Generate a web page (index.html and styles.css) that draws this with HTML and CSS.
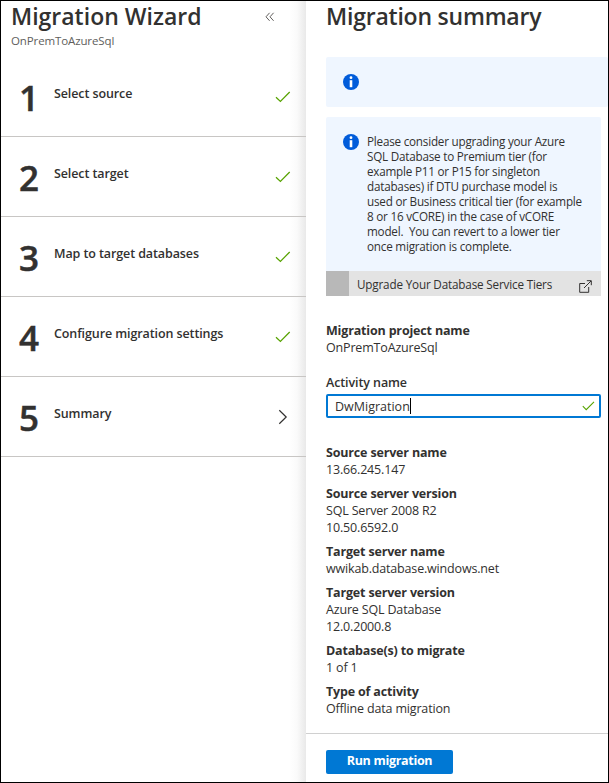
FILE: index.html
```html
<!DOCTYPE html>
<html lang="en">
<head>
<meta charset="utf-8">
<title>Migration Wizard</title>
<link rel="stylesheet" href="styles.css">
</head>
<body>
<div class="window">
  <section class="wizard">
    <header class="wizard-head">
      <h1 class="title"><span>Migration Wizard</span></h1>
      <svg class="collapse" width="10" height="10" viewBox="0 0 10 10"><path d="M4.6 .8 1 4.8l3.6 4M8.6.8 5 4.8l3.6 4"/></svg>
    </header>
    <p class="subtitle"><span>OnPremToAzureSql</span></p>
    <ol class="steps">
      <li class="step"><b class="num">1</b><span class="label">Select source</span><svg class="check" width="16" height="12" viewBox="0 0 16 12"><path d="M1 6.2 5.4 10.4 14.7 1"/></svg></li>
      <li class="step"><b class="num">2</b><span class="label">Select target</span><svg class="check" width="16" height="12" viewBox="0 0 16 12"><path d="M1 6.2 5.4 10.4 14.7 1"/></svg></li>
      <li class="step"><b class="num">3</b><span class="label">Map to target databases</span><svg class="check" width="16" height="12" viewBox="0 0 16 12"><path d="M1 6.2 5.4 10.4 14.7 1"/></svg></li>
      <li class="step"><b class="num">4</b><span class="label">Configure migration settings</span><svg class="check" width="16" height="12" viewBox="0 0 16 12"><path d="M1 6.2 5.4 10.4 14.7 1"/></svg></li>
      <li class="step"><b class="num">5</b><span class="label">Summary</span><svg class="chevron" width="16" height="16" viewBox="0 0 16 16"><path d="M4.3 1.2 11.2 8l-6.9 6.8"/></svg></li>
    </ol>
  </section>
  <section class="summary">
    <div class="content">
      <h1 class="title summary-title"><span>Migration summary</span></h1>
      <div class="notice empty">
        <svg width="16" height="16" viewBox="0 0 16 16"><circle cx="8" cy="8" r="8" fill="#015cda"/><circle cx="8" cy="3.7" r="1.4" fill="#fff"/><path d="M6.7 6.2h2.6v7H6.7z" fill="#fff"/></svg>
      </div>
      <div class="notice advice">
        <svg width="16" height="16" viewBox="0 0 16 16"><circle cx="8" cy="8" r="8" fill="#015cda"/><circle cx="8" cy="3.7" r="1.4" fill="#fff"/><path d="M6.7 6.2h2.6v7H6.7z" fill="#fff"/></svg>
        <p>Please consider upgrading your Azure<br>SQL Database to Premium tier (for<br>example P11 or P15 for singleton<br>databases) if DTU purchase model is<br>used or Business critical tier (for example<br>8 or 16 vCORE) in the case of vCORE<br>model.&nbsp; You can revert to a lower tier<br>once migration is complete.</p>
      </div>
      <a class="upgrade"><i></i><span>Upgrade Your Database Service Tiers</span><svg width="13" height="13" viewBox="0 0 13 13"><path d="M6 3.5H.7v8.8h9V7M5 8 12 1M7.8.7h4.5v4.5"/></svg></a>
      <dl class="project"><dt>Migration project name</dt><dd>OnPremToAzureSql</dd></dl>
      <label class="field-label"><span>Activity name</span></label>
      <div class="field"><span>DwMigration</span><i class="caret"></i><svg class="check" width="13" height="10" viewBox="0 0 13 10"><path d="M.8 5.2 4.2 8.6 12 .8"/></svg></div>
      <dl class="details">
        <div><dt>Source server name</dt><dd>13.66.245.147</dd></div>
        <div><dt>Source server version</dt><dd>SQL Server 2008 R2</dd><dd>10.50.6592.0</dd></div>
        <div><dt>Target server name</dt><dd>wwikab.database.windows.net</dd></div>
        <div><dt>Target server version</dt><dd>Azure SQL Database</dd><dd>12.0.2000.8</dd></div>
        <div><dt>Database(s) to migrate</dt><dd>1 of 1</dd></div>
        <div><dt>Type of activity</dt><dd>Offline data migration</dd></div>
      </dl>
    </div>
    <footer class="actions"><button class="run">Run migration</button></footer>
  </section>
</div>
</body>
</html>
```
FILE: styles.css
```css
* { box-sizing: border-box; }
body, h1, p, ol, dl, dd { margin: 0; padding: 0; }
body { font-family: "Open Sans", "Noto Sans", sans-serif; font-size: 12.5px; color: #323130; background: #fff; }
svg { display: block; flex: none; }
.window { display: grid; grid-template-columns: 305px 1fr; width: 609px; height: 783px; border: 1px solid #000; overflow: hidden; }
.wizard { background: linear-gradient(to right, #fff 288px, #fafafa 296px, #e9e9e9 305px); }
.wizard-head { display: flex; justify-content: space-between; align-items: center; height: 32px; padding: 0 31px 0 10px; }
.title { height: 32px; font-size: 23px; font-weight: 600; line-height: 30px; white-space: nowrap; }
.summary-title { letter-spacing: -.22px; }
.collapse { fill: none; stroke: #605e5c; stroke-width: 1; }
.subtitle { height: 24px; padding-left: 10px; line-height: 16px; font-size: 11.5px; letter-spacing: -.12px; color: #605e5c; }
.steps { list-style: none; }
.step { display: flex; height: 80px; padding: 0 15px 0 18px; border-bottom: 1px solid #c8c6c4; }
.num { width: 35px; font-size: 35px; line-height: 81px; font-weight: 600; -webkit-text-stroke: .5px #323130; }
.label { flex: 1; padding-top: 28px; line-height: 18px; font-weight: 600; letter-spacing: -.1px; }
.step svg { margin-top: 34px; }
.step .chevron { margin-top: 32px; }
.check { fill: none; stroke: #57a300; stroke-width: 1.25; }
.chevron { fill: none; stroke: #323130; stroke-width: 1.2; }
.summary { display: flex; flex-direction: column; min-width: 0; background: #fff; }
.content { flex: 1; padding-left: 20px; }
.notice { display: flex; background: #eff6ff; border-radius: 2px; }
.empty { height: 50px; margin-top: 24px; padding: 17px; }
.advice { width: 275px; height: 154px; margin-top: 10px; padding: 17px 0 0 17px; gap: 8px; border-radius: 2px 2px 0 0; }
.advice p { font-size: 11.7px; line-height: 15px; letter-spacing: -.22px; white-space: nowrap; }
.upgrade { display: flex; align-items: center; width: 275px; height: 25px; background: #e3e3e3; font-size: 11.7px; letter-spacing: -.17px; }
.upgrade i { width: 23px; height: 25px; margin-right: 8px; background: #b8b8b8; }
.upgrade span { flex: 1; white-space: nowrap; }
.upgrade svg { margin: 5px 9px 0 0; fill: none; stroke: #323130; }
dt { font-weight: 700; letter-spacing: -.17px; }
dd { letter-spacing: -.17px; }
dt, dd { line-height: 17px; white-space: nowrap; }
.project { margin-top: 26px; }
.field-label { display: block; margin-top: 18px; line-height: 17px; font-weight: 600; letter-spacing: -.1px; }
.field { display: flex; align-items: center; width: 275px; height: 24px; margin-top: 3px; padding: 0 4px 0 7px; border: 2px solid #0078d4; border-radius: 2px; }
.caret { width: 1px; height: 16px; background: #000; }
.field .check { margin-left: auto; stroke-width: 1.1; }
.details { display: grid; gap: 7px; margin-top: 26px; }
.actions { height: 49px; padding: 16px 0 0 20px; border-top: 1px solid #d0d0d0; }
.run { display: block; width: 127px; height: 24px; padding: 0 0 2px; border: 0; border-radius: 2px; background: #0078d4; color: #fff; font: 700 12.5px/22px "Open Sans", sans-serif; letter-spacing: -.3px; }
```
